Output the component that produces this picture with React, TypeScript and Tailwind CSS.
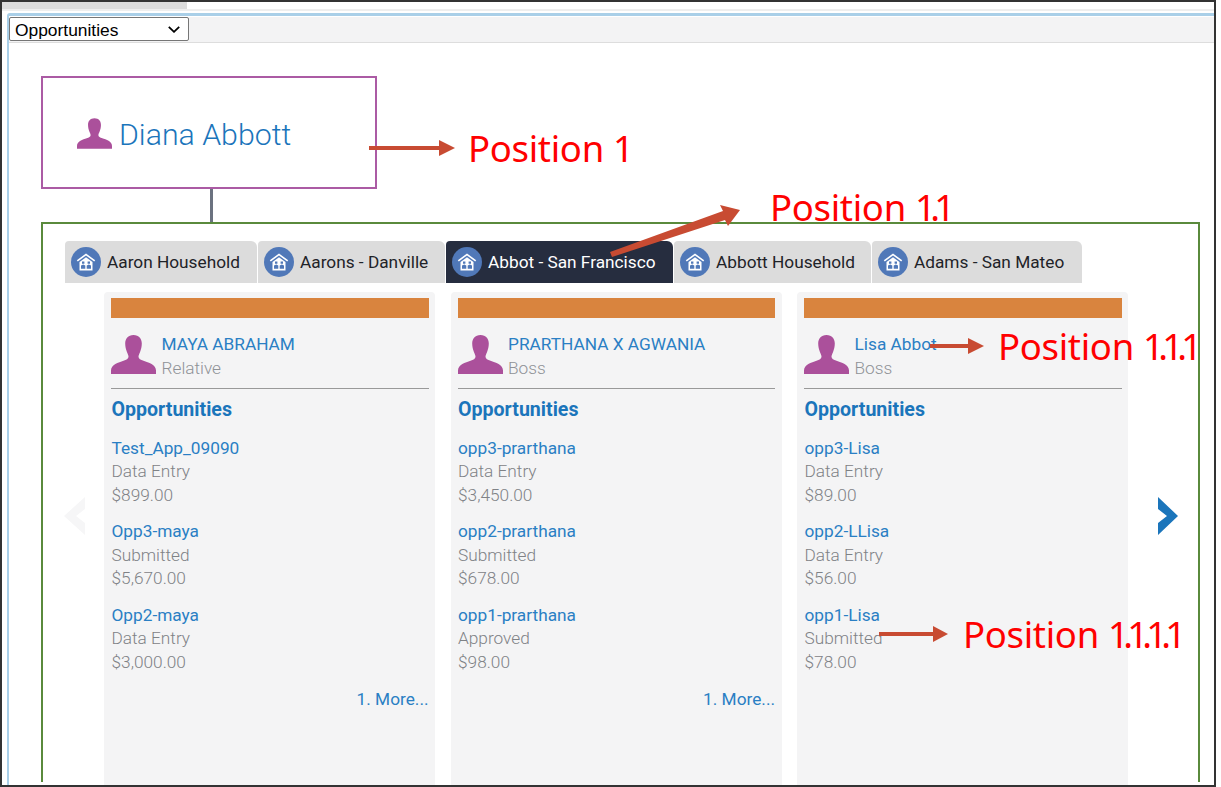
import React from "react";

const roboto = "font-['Roboto','Liberation_Sans',sans-serif]";

function Person({ className }: { className: string }) {
  return (
    <svg viewBox="0 0 45 39" className={className} fill="#ab509b">
      <path d="M22.500 0C17 0 14.200 3.600 14.200 8.600c0 3 .7 6 1.800 8.600.8 1.900 1.500 3 1.500 4.500 0 2-2.200 3-5 4C7.500 27.500 0 29.500 0 35.500V39h45v-3.500c0-6-7.500-8-12.500-9.800-2.800-1-5-2-5-4 0-1.500.7-2.600 1.500-4.500 1.100-2.600 1.800-5.600 1.800-8.600C30.800 3.600 28 0 22.500 0z" />
    </svg>
  );
}

function House() {
  return (
    <span className="flex h-[30px] w-[30px] shrink-0 items-center justify-center rounded-full bg-[#5078b8]">
      <svg viewBox="0 0 20 18" className="h-[18px] w-[20px]">
        <path d="M10 .5 .8 7.300l1 1.300L10 2.600l8.200 6 1-1.300z" fill="#fff" />
        <path d="M3.500 9 10 4.200 16.500 9v8.500h-13z" fill="#fff" />
        <path d="M6 8.500h2.400v2.300H6zM11.600 8.500H14v2.300h-2.400z" fill="#5078b8" />
        <path d="M5 15.800v-3.400l2.200-1 2.100 1v3.400zM10.700 15.800v-3.400l2.200-1 2.100 1v3.400z" fill="#5078b8" />
      </svg>
    </span>
  );
}

const tabs = [
  { label: "Aaron Household", w: "w-[192px]" },
  { label: "Aarons - Danville", w: "w-[187px]" },
  { label: "Abbot - San Francisco", w: "w-[227px]", active: true },
  { label: "Abbott Household", w: "w-[197px]" },
  { label: "Adams - San Mateo", w: "w-[210px]" },
];

const cards = [
  {
    name: "MAYA ABRAHAM",
    role: "Relative",
    more: true,
    items: [
      ["Test_App_09090", "Data Entry", "$899.00"],
      ["Opp3-maya", "Submitted", "$5,670.00"],
      ["Opp2-maya", "Data Entry", "$3,000.00"],
    ],
  },
  {
    name: "PRARTHANA X AGWANIA",
    role: "Boss",
    more: true,
    items: [
      ["opp3-prarthana", "Data Entry", "$3,450.00"],
      ["opp2-prarthana", "Submitted", "$678.00"],
      ["opp1-prarthana", "Approved", "$98.00"],
    ],
  },
  {
    name: "Lisa Abbot",
    role: "Boss",
    more: false,
    items: [
      ["opp3-Lisa", "Data Entry", "$89.00"],
      ["opp2-LLisa", "Data Entry", "$56.00"],
      ["opp1-Lisa", "Submitted", "$78.00"],
    ],
  },
];

function Card({ card }: { card: (typeof cards)[number] }) {
  return (
    <div className="h-[520px] w-[331px] shrink-0 rounded-t-[4px] bg-[#f4f4f5] pl-[7px] pr-[6.500px] pt-[6px]">
      <div className="h-[20px] bg-[#d9843e]" />
      <div className="mt-[15px] flex h-[56px] border-b border-[#999]">
        <Person className="mt-[2px] h-[39px] w-[45px] shrink-0" />
        <div className="-mt-[1px] ml-[5.500px] text-[17.250px] leading-[24px]">
          <div className="text-[#2a7fc4]">{card.name}</div>
          <div className="font-light text-[#8f9297]">{card.role}</div>
        </div>
      </div>
      <div className="ml-[0.500px] mt-[8px] text-[19.600px] font-bold leading-[26px] text-[#1b75bb]">Opportunities</div>
      <div className="ml-[0.500px] mt-[13.500px] flex flex-col gap-[13px]">
        {card.items.map((it) => (
          <div key={it[0]} className="text-[17.250px] leading-[23.500px]">
            <div className="text-[#2a7fc4]">{it[0]}</div>
            <div className="font-light text-[#7f8286]">{it[1]}</div>
            <div className="font-light text-[#7f8286]">{it[2]}</div>
          </div>
        ))}
      </div>
      {card.more && (
        <div className="mt-[12.500px] text-right text-[17.250px] leading-[24px] text-[#2a7fc4]">1. More...</div>
      )}
    </div>
  );
}

function Arrow({ className, viewBox, d }: { className: string; viewBox: string; d: string }) {
  return (
    <svg viewBox={viewBox} className={`absolute ${className}`} fill="#c84b32">
      <path d={d} />
    </svg>
  );
}

function Label({ className, word, nums }: { className: string; word: string; nums: string }) {
  return (
    <div className={`absolute whitespace-nowrap font-['Noto_Sans',sans-serif] text-[36.500px] leading-[44px] tracking-[-0.3px] text-[#ff0000] ${className}`}>
      {word} <span className="tracking-[-5.800px]">{nums}</span>
    </div>
  );
}

export default function App() {
  return (
    <div className="relative h-[787px] w-[1221px] overflow-hidden bg-white">
      <div className={`relative h-[787px] w-[1216px] overflow-hidden border-2 border-[#333333] bg-white ${roboto}`}>
        {/* browser strip */}
        <div className="h-[7px] w-[185px] bg-[#dcdcdc]" />
        <div className="h-[2px] bg-[#eeeeee]" />
        {/* panel */}
        <div className="ml-[5px] mt-[2px] h-[780px] rounded-tl-[3px] border-l-[2px] border-t-[3px] border-[#a9cfe8] pt-[1px]">
          <div className="relative flex h-[26px] border-b border-[#dddddd] bg-[#f3f3f4]">
            <select className="h-[24px] w-[180px] appearance-none rounded-[2px] border border-[#767676] bg-white pl-[5px] pt-[1px] font-['Liberation_Sans',sans-serif] text-[17.400px] leading-[22px] text-black">
              <option>Opportunities</option>
            </select>
            <svg viewBox="0 0 12 7" className="pointer-events-none absolute left-[159px] top-[9px] h-[7px] w-[12px]" fill="none" stroke="#000" strokeWidth="1.800">
              <path d="M.8.8 6 5.800 11.200.8" />
            </svg>
          </div>

          <div className="ml-[32px] mt-[33px] flex h-[113px] w-[336px] items-center border-2 border-[#ab5ba4] pl-[34px] pt-[2px]">
            <Person className="mr-[7px] h-[31px] w-[35px]" />
            <span className="mt-[2px] text-[30.300px] font-light leading-[36px] text-[#1b75bb]">Diana Abbott</span>
          </div>
          <div className="ml-[201px] h-[33px] w-[3px] bg-[#6b7280]" />

          <div className="relative ml-[32px] h-[560px] w-[1159px] border-2 border-b-0 border-[#5a8a3c]">
            <div className="ml-[22px] mt-[17px] flex gap-[1px]">
              {tabs.map((t) => (
                <div
                  key={t.label}
                  className={`flex h-[42px] items-center gap-[6px] rounded-tl-[4px] rounded-tr-[6px] pl-[6px] text-[17.250px] ${t.w} ${t.active ? "bg-[#262d3f] text-white" : "bg-[#dcdcdc] text-[#1f2328]"}`}
                >
                  <House />
                  <span className="mt-[2px] whitespace-nowrap">{t.label}</span>
                </div>
              ))}
            </div>
            <div className="ml-[61px] mt-[9px] flex gap-[15.500px]">
              {cards.map((c) => (
                <Card key={c.name} card={c} />
              ))}
            </div>
            {/* carousel arrows */}
            <svg viewBox="0 0 22 38" className="absolute left-[20px] top-[273px] h-[38px] w-[22px]" fill="#f6f6f7">
              <path d="M22 0v12l-9 7 9 7v12L1 19z" />
            </svg>
            <svg viewBox="0 0 20 38" className="absolute left-[1115px] top-[273px] h-[38px] w-[20px]" fill="#1b75bb">
              <path d="M0 0l20 19L0 38V26l9-7-9-7z" />
            </svg>
          </div>
        </div>

        {/* annotations */}
        <Arrow className="left-[367px] top-[138px] h-[16px] w-[86px]" viewBox="0 0 86 16" d="M0 6h70V0l16 8-16 8v-6H0z" />
        <Label className="left-[466px] top-[123.500px]" word="Position" nums="1" />
        <Arrow className="left-[608px] top-[203px] h-[52px] w-[130px]" viewBox="0 0 130 52" d="M0 47 113 6l-3-6 20 5-12 16-3-6L2 52z" />
        <Label className="left-[768px] top-[182.500px]" word="Position" nums="1.1" />
        <Arrow className="left-[928px] top-[336px] h-[16px] w-[54px]" viewBox="0 0 54 16" d="M0 6h38V0l16 8-16 8v-6H0z" />
        <Label className="left-[996px] top-[321.500px]" word="Position" nums="1.1.1" />
        <Arrow className="left-[877px] top-[624px] h-[16px] w-[69px]" viewBox="0 0 69 16" d="M0 6h54V0l15 8-15 8v-6H0z" />
        <Label className="left-[961px] top-[609.500px]" word="Position" nums="1.1.1.1" />
      </div>
    </div>
  );
}
